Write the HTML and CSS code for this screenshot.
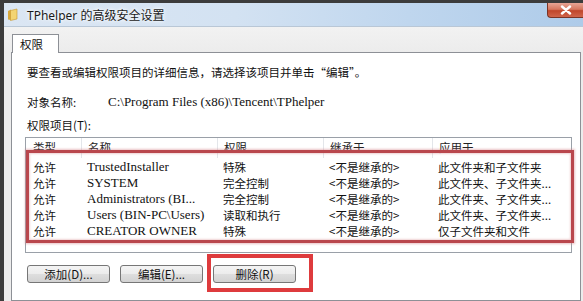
FILE: index.html
```html
<!DOCTYPE html>
<html lang="zh-CN">
<head>
<meta charset="utf-8">
<title>TPhelper 的高级安全设置</title>
<link rel="stylesheet" href="styles.css">
</head>
<body>
<div class="screen">
  <div class="window">
    <div class="titlebar">
      <svg class="folder" width="11" height="13" viewBox="0 0 11 13">
        <path d="M1 3 L4 1.5 L4 12 L1 11.5 Z" fill="#d9a93c"/>
        <path d="M3.5 2.5 L10 1 L10 11 L3.5 12.5 Z" fill="#f3d472" stroke="#c8962e" stroke-width="0.6"/>
      </svg>
      <span class="title">TPhelper 的高级安全设置</span>
      <div class="close">
        <svg width="12" height="10" viewBox="0 0 12 10"><path d="M2 1.5 L10 8.5 M10 1.5 L2 8.5" stroke="#fff" stroke-width="2.4" stroke-linecap="round"/></svg>
      </div>
    </div>
    <div class="client">
      <div class="tabs"><div class="tab">权限</div></div>
      <div class="panel">
        <p class="intro">要查看或编辑权限项目的详细信息，请选择该项目并单击“编辑”。</p>
        <div class="objrow"><span class="objlabel">对象名称:</span><span class="path">C:\Program Files (x86)\Tencent\TPhelper</span></div>
        <div class="listlabel">权限项目(T):</div>
        <div class="list">
          <div class="lv-row lv-head">
            <span class="c1">类型</span><span class="c2">名称</span><span class="c3">权限</span><span class="c4">继承于</span><span class="c5">应用于</span>
          </div>
          <div class="lv-row">
            <span class="c1">允许</span><span class="c2 lat">TrustedInstaller</span><span class="c3">特殊</span><span class="c4">&lt;不是继承的&gt;</span><span class="c5">此文件夹和子文件夹</span>
          </div>
          <div class="lv-row">
            <span class="c1">允许</span><span class="c2 lat">SYSTEM</span><span class="c3">完全控制</span><span class="c4">&lt;不是继承的&gt;</span><span class="c5">此文件夹、子文件夹...</span>
          </div>
          <div class="lv-row">
            <span class="c1">允许</span><span class="c2 lat">Administrators (BI...</span><span class="c3">完全控制</span><span class="c4">&lt;不是继承的&gt;</span><span class="c5">此文件夹、子文件夹...</span>
          </div>
          <div class="lv-row">
            <span class="c1">允许</span><span class="c2 lat">Users (BIN-PC\Users)</span><span class="c3">读取和执行</span><span class="c4">&lt;不是继承的&gt;</span><span class="c5">此文件夹、子文件夹...</span>
          </div>
          <div class="lv-row">
            <span class="c1">允许</span><span class="c2 lat">CREATOR OWNER</span><span class="c3">特殊</span><span class="c4">&lt;不是继承的&gt;</span><span class="c5">仅子文件夹和文件</span>
          </div>
          <div class="mark mark-list"></div>
        </div>
        <div class="buttons">
          <button class="btn">添加(D)...</button>
          <button class="btn">编辑(E)...</button>
          <button class="btn">删除(R)</button>
          <div class="mark mark-btn"></div>
        </div>
      </div>
    </div>
  </div>
</div>
</body>
</html>
```

FILE: styles.css
```css
html, body {
  margin: 0;
  padding: 0;
}
body {
  font-family: "Liberation Serif", "Noto Sans CJK SC", serif;
  font-size: 11.5px;
  color: #111;
}
.screen {
  width: 583px;
  height: 301px;
  overflow: hidden;
  background: #3c3c3c;
  padding: 3px 0 0 4px;
  box-sizing: border-box;
}
.window {
  height: 100%;
  background: #eeeeee;
  display: flex;
  flex-direction: column;
}
.titlebar {
  height: 24px;
  flex: none;
  display: flex;
  align-items: center;
  background: linear-gradient(to right, #dbe6f3 0%, #d3e2f2 40%, #bfd6ee 70%, #aecbe9 100%);
  border-bottom: 1px solid #b9c7d6;
  box-sizing: border-box;
}
.folder {
  margin-left: 3px;
  flex: none;
}
.title {
  margin-left: 9px;
  font-family: "Noto Sans", "Noto Sans CJK SC", sans-serif;
  font-size: 12px;
  color: #1a1a1a;
  text-shadow: 0 0 5px #fff, 0 0 3px #fff;
}
.close {
  margin-left: auto;
  align-self: flex-start;
  width: 36px;
  height: 15px;
  box-sizing: border-box;
  border: 1px solid #7a3426;
  border-top: none;
  border-right: none;
  border-bottom-left-radius: 4px;
  background: linear-gradient(to bottom, #e7a595 0%, #d5775f 45%, #c0462b 55%, #d0654b 100%);
  display: flex;
  align-items: center;
  justify-content: center;
}
.client {
  flex: 1;
  padding-left: 7px;
  display: flex;
  flex-direction: column;
  background: linear-gradient(to bottom, #f2f2f2, #ececec 25px);
}
.tabs {
  height: 25px;
  display: flex;
  align-items: flex-end;
  padding-left: 1px;
}
.tab {
  width: 47px;
  height: 19px;
  box-sizing: border-box;
  border: 1px solid #8d9096;
  border-bottom: none;
  background: #ffffff;
  margin-bottom: -1px;
  position: relative;
  z-index: 1;
  padding-left: 7px;
  line-height: 18px;
  font-family: "Noto Sans CJK SC", sans-serif;
  font-size: 11.5px;
}
.panel {
  flex: 1;
  width: 570px;
  box-sizing: border-box;
  border: 1px solid #8d9096;
  background: #ffffff;
  padding-left: 15px;
}
.intro {
  margin: 11px 0 0 0;
  line-height: 16px;
  font-family: "Noto Sans CJK SC", sans-serif;
  white-space: nowrap;
}
.objrow {
  margin-top: 14px;
  line-height: 16px;
  display: flex;
  white-space: nowrap;
}
.objlabel {
  width: 81px;
  font-family: "Noto Sans CJK SC", sans-serif;
}
.path {
  font-family: "Liberation Serif", serif;
  font-size: 13px;
}
.listlabel {
  margin-top: 7px;
  line-height: 16px;
  font-family: "Noto Sans CJK SC", sans-serif;
}
.list {
  margin-top: 4px;
  margin-left: -2px;
  width: 547px;
  height: 116px;
  box-sizing: border-box;
  border: 1px solid #9aa0a8;
  position: relative;
  font-family: "Noto Sans CJK SC", sans-serif;
}
.lv-row {
  display: grid;
  grid-template-columns: 55px 136px 106px 109px 1fr;
  height: 16px;
  line-height: 16px;
  white-space: nowrap;
}
.lv-row span {
  padding-left: 6px;
  overflow: hidden;
}
.lv-row .c1 {
  padding-left: 7px;
}
.lv-head {
  height: 20px;
  line-height: 19px;
  margin-bottom: 1px;
  color: #222;
}
.lv-head span + span {
  border-left: 1px solid #e3e6ea;
}
.lat {
  font-family: "Liberation Serif", serif;
  font-size: 13px;
}
.mark {
  position: absolute;
  box-sizing: border-box;
  pointer-events: none;
}
.mark-list {
  left: 0;
  top: 12px;
  width: 548px;
  height: 93px;
  border: 3px solid #b9474d;
  box-shadow: 0 0 2px 1px rgba(210, 120, 125, 0.45), inset 0 0 2px 1px rgba(210, 120, 125, 0.35);
}
.buttons {
  margin-top: 12px;
  display: flex;
  gap: 10px;
  position: relative;
}
.btn {
  width: 83px;
  height: 18px;
  padding: 0;
  box-sizing: border-box;
  border: 1px solid #767676;
  border-radius: 3px;
  background: linear-gradient(to bottom, #f4f4f4 0%, #ececec 48%, #dedede 52%, #d2d2d2 100%);
  font-family: "Noto Sans CJK SC", sans-serif;
  font-size: 11.5px;
  line-height: 16px;
  color: #111;
}
.mark-btn {
  left: 180px;
  top: -11px;
  width: 106px;
  height: 38px;
  border: 4px solid #de3b3d;
}
```
